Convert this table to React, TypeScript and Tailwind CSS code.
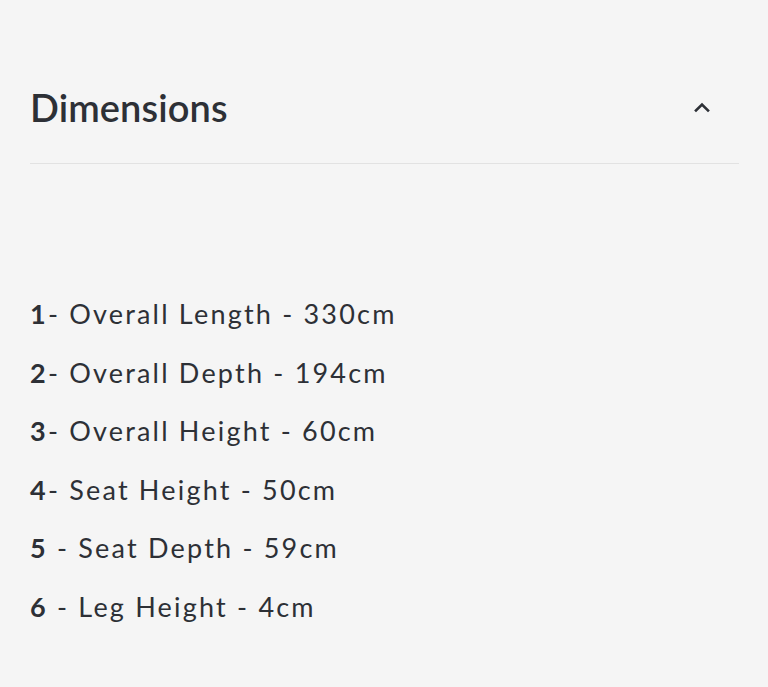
import React from 'react';

const ROWS = [
  { n: '1', label: '- Overall Length - 330cm' },
  { n: '2', label: '- Overall Depth - 194cm' },
  { n: '3', label: '- Overall Height - 60cm' },
  { n: '4', label: '- Seat Height - 50cm' },
  { n: '5', label: ' - Seat Depth - 59cm' },
  { n: '6', label: ' - Leg Height - 4cm' },
];

export default function App() {
  return (
    <div className="min-h-[687px] bg-[#f5f5f5] text-[#2d3036] font-['Lato',sans-serif]">
      <div className="pl-[30px] pr-[29px]">
        <div className="flex items-center justify-between border-b border-[#e2e2e2] h-[164px] pt-[50px]">
          <h2 className="text-[38px] font-semibold leading-none tracking-[0.1px]">Dimensions</h2>
          <svg className="mr-[28px]" width="18" height="12" viewBox="0 0 18 12" fill="none">
            <path d="M3 9.5 L9 3.5 L15 9.5" stroke="#2d3036" strokeWidth="2.6" strokeLinecap="square" />
          </svg>
        </div>
        <div className="pt-[121px] flex flex-col">
          {ROWS.map(r => (
            <p key={r.n} className="text-[27px] leading-[58.6px] tracking-[2.2px] whitespace-pre">
              <span className="font-bold">{r.n}</span>{r.label}
            </p>
          ))}
        </div>
      </div>
    </div>
  );
}
